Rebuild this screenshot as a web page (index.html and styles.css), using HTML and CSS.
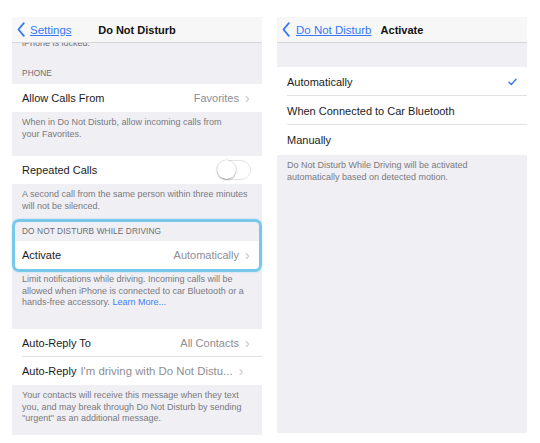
FILE: index.html
```html
<!DOCTYPE html>
<html>
<head>
<meta charset="utf-8">
<link rel="stylesheet" href="styles.css">
</head>
<body>
<div class="stage">
  <div class="panel left">
    <div class="nav">
      <a class="back"><svg class="chev" width="8" height="15" viewBox="0 0 8 15"><path d="M6.8 1.2 L1.5 7.5 L6.8 13.8" fill="none" stroke="#3478f6" stroke-width="1.8" stroke-linecap="round" stroke-linejoin="round"/></svg><span class="back-text">Settings</span></a>
      <div class="title">Do Not Disturb</div>
    </div>
    <div class="clip"><div class="clip-text">iPhone is locked.</div></div>
    <div class="header h-phone">PHONE</div>
    <div class="row"><span class="label">Allow Calls From</span><span class="value">Favorites</span><span class="arrow">›</span></div>
    <div class="footer f1">When in Do Not Disturb, allow incoming calls from<br>your Favorites.</div>
    <div class="row"><span class="label">Repeated Calls</span><span class="toggle"><span class="knob"></span></span></div>
    <div class="footer f2">A second call from the same person within three minutes<br>will not be silenced.</div>
    <div class="hl">
      <div class="header h-drive">DO NOT DISTURB WHILE DRIVING</div>
      <div class="row"><span class="label">Activate</span><span class="value">Automatically</span><span class="arrow">›</span></div>
    </div>
    <div class="footer f3">Limit notifications while driving. Incoming calls will be<br>allowed when iPhone is connected to car Bluetooth or a<br>hands-free accessory. <span class="link">Learn More...</span></div>
    <div class="group">
      <div class="row sep"><span class="label">Auto-Reply To</span><span class="value">All Contacts</span><span class="arrow">›</span></div>
      <div class="row"><span class="label">Auto-Reply</span><span class="value msg">I'm driving with Do Not Distu...</span><span class="arrow">›</span></div>
    </div>
    <div class="footer f4">Your contacts will receive this message when they text<br>you, and may break through Do Not Disturb by sending<br>"urgent" as an additional message.</div>
  </div>
  <div class="panel right">
    <div class="nav">
      <a class="back"><svg class="chev" width="8" height="15" viewBox="0 0 8 15"><path d="M6.8 1.2 L1.5 7.5 L6.8 13.8" fill="none" stroke="#3478f6" stroke-width="1.8" stroke-linecap="round" stroke-linejoin="round"/></svg><span class="back-text">Do Not Disturb</span></a>
      <div class="title">Activate</div>
    </div>
    <div class="spacer"></div>
    <div class="group">
      <div class="row sep"><span class="label">Automatically</span><svg class="check" width="9" height="8" viewBox="0 0 9 8"><path d="M1 4.3 L3.3 6.6 L8 1.2" fill="none" stroke="#3478f6" stroke-width="1.4" stroke-linecap="round" stroke-linejoin="round"/></svg></div>
      <div class="row sep"><span class="label">When Connected to Car Bluetooth</span></div>
      <div class="row"><span class="label">Manually</span></div>
    </div>
    <div class="footer">Do Not Disturb While Driving will be activated<br>automatically based on detected motion.</div>
  </div>
</div>
</body>
</html>
```
FILE: styles.css
```css
* { box-sizing: border-box; }
body {
  margin: 0;
  background: #ffffff;
  font-family: "Liberation Sans", Arial, sans-serif;
  color: #1c1c1e;
}
.stage {
  display: flex;
  gap: 15px;
  padding: 17px 0 0 12px;
}
.panel {
  width: 250px;
  background: #efeff4;
  display: flex;
  flex-direction: column;
}
.left { height: 418px; }
.right { height: 416px; }
.nav {
  height: 26px;
  background: #f7f7f8;
  border-bottom: 1px solid #d6d6da;
  position: relative;
  display: flex;
  align-items: center;
  flex-shrink: 0;
}
.back {
  display: flex;
  align-items: center;
  padding-left: 5px;
  color: #3478f6;
  font-size: 11.5px;
  position: relative;
  z-index: 1;
}
.chev { margin-right: 5px; }
.back-text { text-decoration: underline; }
.right .back-text { margin-left: 1px; }
.title {
  position: absolute;
  left: 0;
  right: 0;
  text-align: center;
  font-weight: bold;
  font-size: 11px;
  color: #111;
}
.clip {
  height: 8px;
  overflow: hidden;
  flex-shrink: 0;
}
.clip-text {
  margin-top: -5px;
  padding-left: 10px;
  font-size: 9px;
  line-height: 11px;
  color: #6d6d72;
}
.header {
  font-size: 8.3px;
  line-height: 10px;
  color: #6d6d72;
  padding-left: 10px;
  letter-spacing: 0.1px;
}
.h-phone { padding-top: 17px; padding-bottom: 6px; }
.h-drive { padding-top: 14px; padding-bottom: 5px; }
.row {
  height: 28px;
  background: #ffffff;
  display: flex;
  align-items: center;
  padding: 0 11px 0 10px;
  font-size: 11px;
  flex-shrink: 0;
  position: relative;
}
.label { color: #1c1c1e; white-space: nowrap; }
.value {
  margin-left: auto;
  color: #8e8e93;
  white-space: nowrap;
}
.value.msg { margin-left: 4px; font-size: 11.4px; }
.arrow {
  margin-left: 6px;
  color: #c4c4c9;
  font-size: 14px;
  line-height: 14px;
  width: 6px;
}
.group .row.sep::after {
  content: "";
  position: absolute;
  left: 10px;
  right: 0;
  bottom: 0;
  height: 1px;
  background: #e2e2e6;
}
.right .row { height: 29px; }
.right .row:last-child { height: 30px; }
.footer {
  font-size: 9px;
  line-height: 11.5px;
  color: #7a7a80;
  padding: 5px 10px 0 10px;
  flex-shrink: 0;
  white-space: nowrap;
}
.f1 { height: 44px; }
.f2 { height: 28px; }
.f3 { height: 60px; }
.link { color: #3a82f7; }
.toggle {
  margin-left: auto;
  margin-right: 0;
  width: 34px;
  height: 20px;
  border-radius: 10px;
  border: 1.5px solid #e3e3e8;
  background: #fff;
  position: relative;
}
.knob {
  position: absolute;
  left: -1px;
  top: -1px;
  width: 19px;
  height: 19px;
  border-radius: 50%;
  background: #fff;
  box-shadow: 0 1px 2px rgba(0,0,0,0.3), 0 0 0 0.5px rgba(0,0,0,0.12);
}
.hl { position: relative; }
.hl::after {
  content: "";
  position: absolute;
  left: 0;
  right: 0;
  top: 7px;
  bottom: -3px;
  border: 3px solid #78c8ec;
  border-radius: 7px;
  box-shadow: 0 0 2px rgba(120,200,236,0.6);
}
.spacer { height: 24px; flex-shrink: 0; }
.check { margin-left: auto; margin-right: 0; }
.right .row { padding-right: 10px; }
```
